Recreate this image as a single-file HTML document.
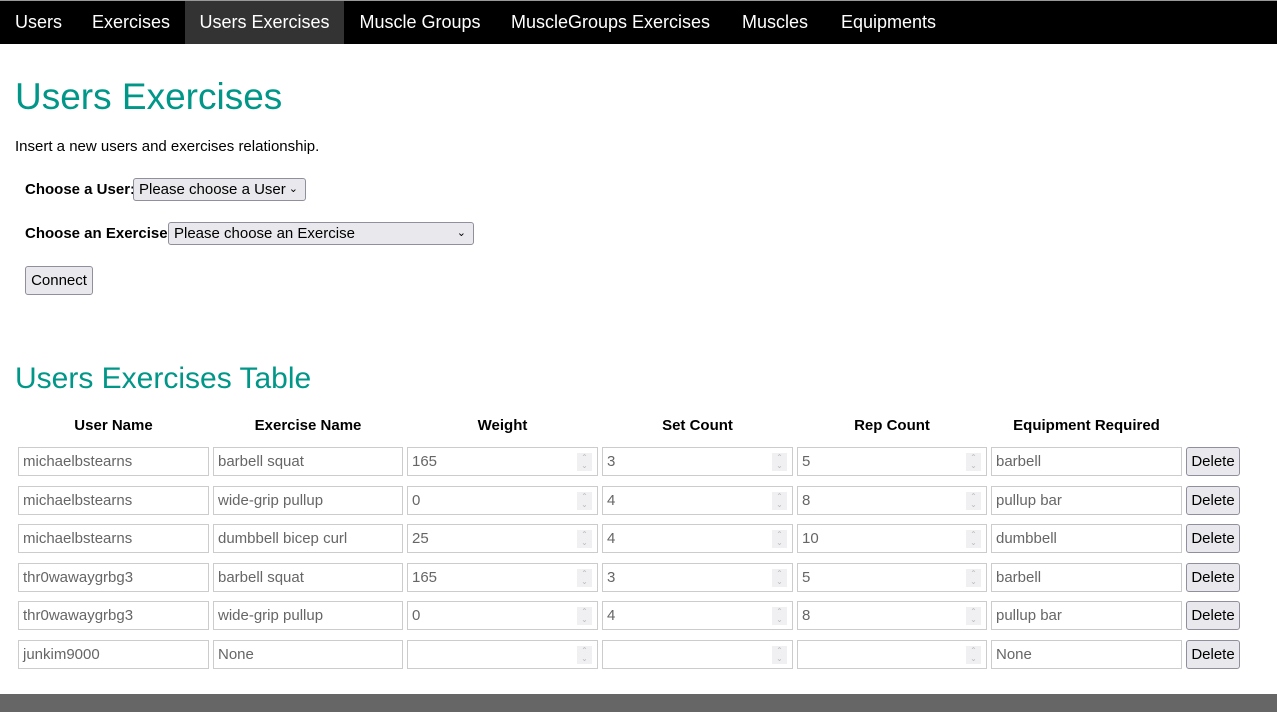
<!DOCTYPE html>
<html><head><style>
*{box-sizing:border-box}
body{margin:0;width:1277px;height:712px;overflow:hidden;background:#fff;font-family:"Liberation Sans",sans-serif;position:relative}
.nav{position:absolute;left:0;top:0;width:1277px;height:44px;background:#000;border-top:1px solid #999}
.nav span{position:absolute;top:0;height:43px;line-height:43px;color:#fff;font-size:18px;text-align:center}
.nav .act{background:#333}
h1{position:absolute;left:15px;top:76px;margin:0;font-weight:normal;font-size:37px;color:#009688}
h2{position:absolute;left:15px;top:362px;margin:0;font-weight:normal;font-size:30px;color:#009688}
.t{position:absolute;font-size:15px;color:#000}
.b{font-weight:bold;font-size:15px}
.sel{position:absolute;height:23px;border:1px solid #8f8f9d;border-radius:3px;background:#e9e9ed;font-size:15px;line-height:21px;padding-left:5px}
.sel i{position:absolute;right:7px;top:0;font-style:normal;font-size:11px}
.btn{position:absolute;border:1px solid #8f8f9d;border-radius:3px;background:#e9e9ed;font-size:15px;text-align:center}
.in{position:absolute;height:29px;border:1px solid #ccc;font-size:15px;line-height:27px;padding-left:4px;color:#666;background:#fff}
.sp{position:absolute;right:5px;top:5px;width:15px;height:18px;background:#f0f0f3;color:#bbb;font-size:8px;line-height:8px;text-align:center;padding-top:1px}
.th{position:absolute;top:417px;font-weight:bold;font-size:15px;text-align:center}
.foot{position:absolute;left:0;top:694px;width:1277px;height:18px;background:#666}
</style></head><body>
<div class="nav">
<span style="left:0;width:77px">Users</span>
<span style="left:77px;width:108px">Exercises</span>
<span class="act" style="left:185px;width:159px">Users Exercises</span>
<span style="left:344px;width:152px">Muscle Groups</span>
<span style="left:496px;width:229px">MuscleGroups Exercises</span>
<span style="left:725px;width:100px">Muscles</span>
<span style="left:825px;width:127px">Equipments</span>
</div>
<h1>Users Exercises</h1>
<div class="t" style="left:15px;top:138px">Insert a new users and exercises relationship.</div>
<div class="t b" style="left:25px;top:181px">Choose a User:</div>
<div class="sel" style="left:133px;top:178px;width:173px">Please choose a User<i>&#8964;</i></div>
<div class="t b" style="left:25px;top:225px">Choose an Exercise:</div>
<div class="sel" style="left:168px;top:222px;width:306px">Please choose an Exercise<i>&#8964;</i></div>
<div class="btn" style="left:25px;top:266px;width:68px;height:29px;line-height:27px">Connect</div>
<h2>Users Exercises Table</h2>
<div class="th" style="left:18px;width:191px">User Name</div>
<div class="th" style="left:213px;width:190px">Exercise Name</div>
<div class="th" style="left:407px;width:191px">Weight</div>
<div class="th" style="left:602px;width:191px">Set Count</div>
<div class="th" style="left:797px;width:190px">Rep Count</div>
<div class="th" style="left:991px;width:191px">Equipment Required</div>
<div id="rows"></div>
<div class="in" style="left:18px;top:447px;width:191px">michaelbstearns</div><div class="in" style="left:213px;top:447px;width:190px">barbell squat</div><div class="in" style="left:407px;top:447px;width:191px">165<div class="sp">&#8963;<br>&#8964;</div></div><div class="in" style="left:602px;top:447px;width:191px">3<div class="sp">&#8963;<br>&#8964;</div></div><div class="in" style="left:797px;top:447px;width:190px">5<div class="sp">&#8963;<br>&#8964;</div></div><div class="in" style="left:991px;top:447px;width:191px">barbell</div><div class="btn" style="left:1186px;top:447px;width:54px;height:29px;line-height:27px">Delete</div>
<div class="in" style="left:18px;top:486px;width:191px">michaelbstearns</div><div class="in" style="left:213px;top:486px;width:190px">wide-grip pullup</div><div class="in" style="left:407px;top:486px;width:191px">0<div class="sp">&#8963;<br>&#8964;</div></div><div class="in" style="left:602px;top:486px;width:191px">4<div class="sp">&#8963;<br>&#8964;</div></div><div class="in" style="left:797px;top:486px;width:190px">8<div class="sp">&#8963;<br>&#8964;</div></div><div class="in" style="left:991px;top:486px;width:191px">pullup bar</div><div class="btn" style="left:1186px;top:486px;width:54px;height:29px;line-height:27px">Delete</div>
<div class="in" style="left:18px;top:524px;width:191px">michaelbstearns</div><div class="in" style="left:213px;top:524px;width:190px">dumbbell bicep curl</div><div class="in" style="left:407px;top:524px;width:191px">25<div class="sp">&#8963;<br>&#8964;</div></div><div class="in" style="left:602px;top:524px;width:191px">4<div class="sp">&#8963;<br>&#8964;</div></div><div class="in" style="left:797px;top:524px;width:190px">10<div class="sp">&#8963;<br>&#8964;</div></div><div class="in" style="left:991px;top:524px;width:191px">dumbbell</div><div class="btn" style="left:1186px;top:524px;width:54px;height:29px;line-height:27px">Delete</div>
<div class="in" style="left:18px;top:563px;width:191px">thr0wawaygrbg3</div><div class="in" style="left:213px;top:563px;width:190px">barbell squat</div><div class="in" style="left:407px;top:563px;width:191px">165<div class="sp">&#8963;<br>&#8964;</div></div><div class="in" style="left:602px;top:563px;width:191px">3<div class="sp">&#8963;<br>&#8964;</div></div><div class="in" style="left:797px;top:563px;width:190px">5<div class="sp">&#8963;<br>&#8964;</div></div><div class="in" style="left:991px;top:563px;width:191px">barbell</div><div class="btn" style="left:1186px;top:563px;width:54px;height:29px;line-height:27px">Delete</div>
<div class="in" style="left:18px;top:601px;width:191px">thr0wawaygrbg3</div><div class="in" style="left:213px;top:601px;width:190px">wide-grip pullup</div><div class="in" style="left:407px;top:601px;width:191px">0<div class="sp">&#8963;<br>&#8964;</div></div><div class="in" style="left:602px;top:601px;width:191px">4<div class="sp">&#8963;<br>&#8964;</div></div><div class="in" style="left:797px;top:601px;width:190px">8<div class="sp">&#8963;<br>&#8964;</div></div><div class="in" style="left:991px;top:601px;width:191px">pullup bar</div><div class="btn" style="left:1186px;top:601px;width:54px;height:29px;line-height:27px">Delete</div>
<div class="in" style="left:18px;top:640px;width:191px">junkim9000</div><div class="in" style="left:213px;top:640px;width:190px">None</div><div class="in" style="left:407px;top:640px;width:191px"><div class="sp">&#8963;<br>&#8964;</div></div><div class="in" style="left:602px;top:640px;width:191px"><div class="sp">&#8963;<br>&#8964;</div></div><div class="in" style="left:797px;top:640px;width:190px"><div class="sp">&#8963;<br>&#8964;</div></div><div class="in" style="left:991px;top:640px;width:191px">None</div><div class="btn" style="left:1186px;top:640px;width:54px;height:29px;line-height:27px">Delete</div>
<div class="foot"></div>
</body></html>
